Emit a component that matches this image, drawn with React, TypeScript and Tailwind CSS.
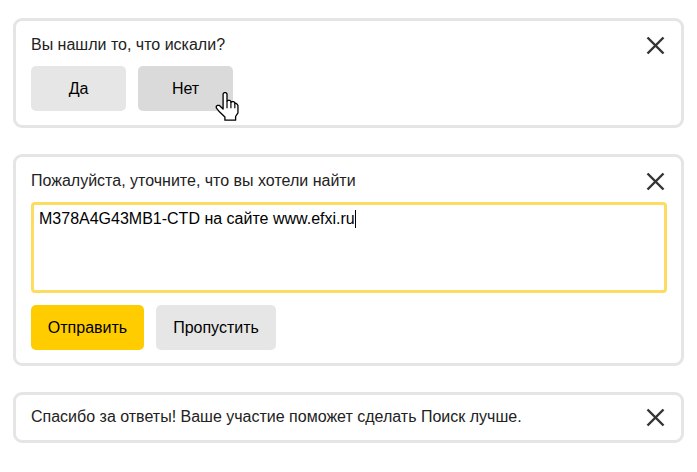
import React from 'react';

function CloseIcon() {
  return (
    <button className="shrink-0 w-[22px] h-[22px] flex items-center justify-center text-[#333] cursor-pointer" title="Закрыть">
      <svg width="19" height="19" viewBox="0 0 19 19" fill="none" stroke="currentColor" strokeWidth="2.4" strokeLinecap="butt">
        <line x1="1.5" y1="1.5" x2="17.5" y2="17.5" />
        <line x1="17.5" y1="1.5" x2="1.5" y2="17.5" />
      </svg>
    </button>
  );
}

function HandCursor() {
  return (
    <svg width="24" height="30" viewBox="0 0 18 23" className="absolute left-[77px] top-[26px] pointer-events-none">
      <path
        d="M6 1.5 L6.8 .5 L8.2 .5 L9 1.5 L9 7.2 L9.8 6.4 L11.2 6.4 L12 7.2 L12 8 L12.8 7.4 L14.2 7.4 L15 8.2 L15 9 L15.8 8.6 L16.8 9.4 L17.4 10.4 L17.4 16 L15.6 18.8 L15.6 21.6 L7.4 21.6 L7.4 19.2 L3.2 15.2 L.8 12.2 L.8 11 L1.8 10.2 L3 10.2 L6 13 Z"
        fill="#fff"
        stroke="#000"
        strokeWidth="1"
        strokeLinejoin="round"
      />
      <path d="M9 7.2 V12.5 M12 8 V12.5 M15 9 V12.5" stroke="#000" strokeWidth="0.9" />
    </svg>
  );
}

export default function App() {
  return (
    <div className="w-[697px] h-[472px] bg-white px-[13px] pt-[18px] flex flex-col gap-[26px] font-['Liberation_Sans',Arial,sans-serif] text-[16px] leading-[20px] text-[#222]">
      {/* Вопрос */}
      <div className="border-[3px] border-[#e5e5e5] rounded-[9px] pl-[15px] pr-[15px] pt-[13px] pb-[14px]">
        <div className="flex items-center justify-between">
          <span>Вы нашли то, что искали?</span>
          <CloseIcon />
        </div>
        <div className="flex gap-[12px] mt-[10px]">
          <button className="w-[95px] h-[45px] rounded-[5px] bg-[#e6e6e6] text-black cursor-pointer">Да</button>
          <div className="relative">
            <button className="w-[95px] h-[45px] rounded-[5px] bg-[#dadada] text-black cursor-pointer">Нет</button>
            <HandCursor />
          </div>
        </div>
      </div>

      {/* Уточнение */}
      <div className="border-[3px] border-[#e5e5e5] rounded-[9px] pl-[15px] pr-[14px] pt-[13px] pb-[13px]">
        <div className="flex items-center justify-between pr-[1px]">
          <span>Пожалуйста, уточните, что вы хотели найти</span>
          <CloseIcon />
        </div>
        <div className="mt-[10px] h-[91px] border-[3px] border-[#fddc62] rounded-[4px] px-[5px] pt-[4px] text-black">
          M378A4G43MB1-CTD на сайте www.efxi.ru<span className="inline-block w-px h-[18px] bg-black align-[-4px]" />
        </div>
        <div className="flex gap-[12px] mt-[12px]">
          <button className="w-[113px] h-[45px] rounded-[5px] bg-[#ffcc00] text-black cursor-pointer">Отправить</button>
          <button className="w-[120px] h-[45px] rounded-[5px] bg-[#e6e6e6] text-black cursor-pointer">Пропустить</button>
        </div>
      </div>

      {/* Спасибо */}
      <div className="border-[3px] border-[#e5e5e5] rounded-[9px] pl-[15px] pr-[15px] pt-[11px] pb-[12px]">
        <div className="flex items-center justify-between">
          <span>Спасибо за ответы! Ваше участие поможет сделать Поиск лучше.</span>
          <CloseIcon />
        </div>
      </div>
    </div>
  );
}
